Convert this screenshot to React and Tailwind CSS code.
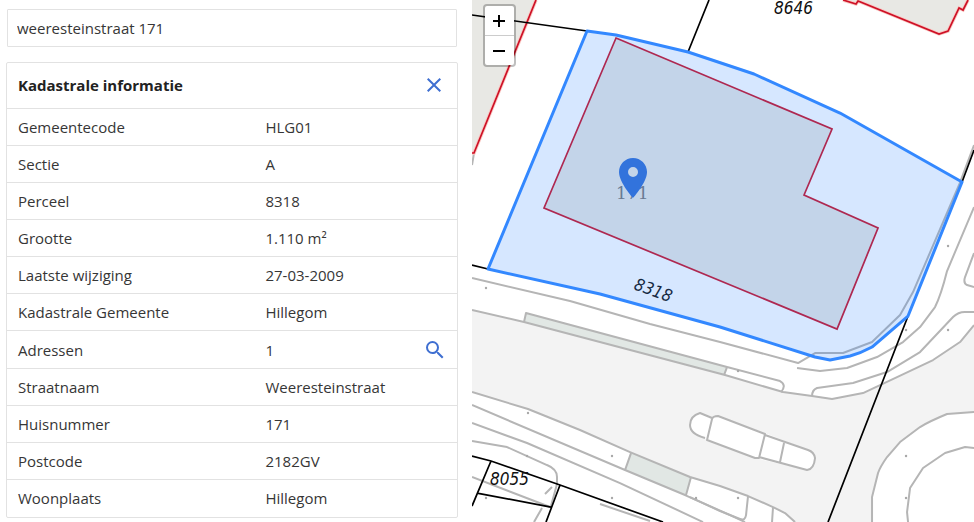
import React from "react";

const before = [
  ["Gemeentecode", "HLG01"],
  ["Sectie", "A"],
  ["Perceel", "8318"],
  ["Grootte", "1.110 m²"],
  ["Laatste wijziging", "27-03-2009"],
  ["Kadastrale Gemeente", "Hillegom"],
];
const after = [
  ["Straatnaam", "Weeresteinstraat"],
  ["Huisnummer", "171"],
  ["Postcode", "2182GV"],
  ["Woonplaats", "Hillegom"],
];

function Row({ label, value, children }) {
  return (
    <tr className={children ? "h-[38px] border-t border-[#e2e2e2]" : "h-[37px] border-t border-[#e2e2e2]"}>
      <th scope="row" className="w-[55%] pl-[11px] text-left font-normal">
        {label}
      </th>
      <td className="pr-[10px] pl-[11px]">
        <div className="flex items-center justify-between">
          <span>{value}</span>
          {children}
        </div>
      </td>
    </tr>
  );
}

function InfoPanel() {
  return (
    <aside className="pt-[9px] pr-[14px] pl-[6px]">
      <input
        type="text"
        aria-label="Zoek adres"
        defaultValue="weeresteinstraat 171"
        className="mx-px block h-[38px] w-[calc(100%-2px)] rounded-[1px] border border-[#e2e2e2] px-[9px] outline-none"
      />
      <section className="mt-[15px] rounded-[2px] border border-[#e2e2e2]">
        <header className="flex h-[45px] items-center justify-between pr-[11px] pb-[2px] pl-[11px]">
          <h2 className="font-bold text-[#222]">Kadastrale informatie</h2>
          <button type="button" aria-label="Sluiten" className="text-[#3f6fd1]">
            <svg viewBox="0 0 24 24" className="size-6" fill="currentColor">
              <path d="M19 6.41 17.59 5 12 10.59 6.41 5 5 6.41 10.59 12 5 17.59 6.41 19 12 13.41 17.59 19 19 17.59 13.41 12z" />
            </svg>
          </button>
        </header>
        <table className="w-full border-collapse">
          <tbody>
            {before.map(([l, v]) => (
              <Row key={l} label={l} value={v} />
            ))}
            <Row label="Adressen" value="1">
              <button type="button" aria-label="Zoek adressen" className="text-[#3f6fd1]">
                <svg viewBox="0 0 24 24" className="size-6" fill="currentColor">
                  <path d="M15.5 14h-.79l-.28-.27A6.47 6.47 0 0 0 16 9.5 6.5 6.5 0 1 0 9.5 16c1.61 0 3.09-.59 4.23-1.57l.27.28v.79l5 4.99L20.49 19l-4.99-5zm-6 0C7.01 14 5 11.99 5 9.5S7.01 5 9.5 5 14 7.01 14 9.5 11.99 14 9.5 14z" />
                </svg>
              </button>
            </Row>
            {after.map(([l, v]) => (
              <Row key={l} label={l} value={v} />
            ))}
          </tbody>
        </table>
      </section>
    </aside>
  );
}

const dots = [
  [486, 288], [528, 413], [527, 456], [612, 456], [612, 498], [696, 498], [486, 498],
  [738, 371], [906, 330], [948, 330], [948, 246], [906, 456], [906, 498], [738, 498],
];

function CadastralMap() {
  return (
    <svg
      viewBox="472 0 502 522"
      preserveAspectRatio="xMinYMin slice"
      className="block h-full w-full bg-white"
      role="img"
      aria-label="Kadastrale kaart"
    >
      {/* road surface */}
      <path
        fill="#f3f3f3"
        d="M472 310 524 322 725 375 783 392 812 396 832 399 863 393 897 377 933 360 960 342 974 325V412L947 414 920 427 900 442 887 457 878 473 872 497V522H795L785 513 773 507 748 496 720 486 690 477 630 452 580 430 528 409 472 392Z"
      />
      {/* traffic islands */}
      <path fill="#fff" d="M712 418 700 413Q690 416 690 425T705 438L707 441 755 458 807 470Q816 467 815 458 813 452 808 450L765 433 718 416Z" />
      <path fill="#e1e7e4" d="M526 313 727 367 724 375 524 322ZM631 453 691 477 686 495 625 470Z" />

      {/* kerb lines */}
      <g fill="none" stroke="#b5b5b5" strokeWidth="2" strokeLinejoin="round">
        <path d="M472 278 570 301 650 324 720 342 798 363 815 353H843L872 342 900 315 913 292 959 185 974 145" />
        <path d="M472 310 524 322 725 375 783 392 812 396 832 399 863 393 897 377 933 360 960 342 974 325" />
        <path d="M524 322 526 313 727 367 724 375M727 367 780 381Q787 385 781 392" />
        <path d="M974 207 947 271Q941 295 935 307L920 327 903 342 877 357 847 368 820 371 797 368" />
        <path d="M974 253 965 277Q963 283 967 285L974 287" />
        <path d="M974 312H967Q959 311 953 317L920 352 887 372 853 383 817 388Q812 390 812 396" />
        <path d="M974 412 947 414Q930 421 920 427L900 442 887 457Q880 467 878 473L872 497V522" />
        <path d="M974 448 965 447 945 453 923 468 910 488 907 512 908 522" />
        <path d="M472 392 528 409 580 430 630 452 690 477 720 486 748 496 773 507 785 513 795 522" />
        <path d="M472 405 625 470 685 495 730 515 745 522M631 453 625 470M691 477 686 495" />
        <path d="M472 423 527 443 620 483 703 522" />
        <path d="M472 441 507 447 547 465Q557 469 557 477V484L551 506M472 477 550 507M552 487 545 494M542 508 534 522M600 504 650 521" />
        <path d="M748 496 746 515Q745 521 740 519L720 511 690 497M773 507 772 522" />
        <path d="M712 418 700 413Q690 416 690 425T705 438M712 419 707 440 755 458H759L765 434 718 416Q713 416 712 419ZM765 435 808 450Q814 452 815 458 814 469 807 470L759 457M784 443 780 462" />
        <path d="M474 153 472 165" />
      </g>
      <g fill="#a8a8a8">
        {dots.map(([x, y]) => (
          <circle key={`${x}-${y}`} cx={x} cy={y} r="1.2" />
        ))}
      </g>

      {/* buildings */}
      <g fill="#e8e8e4">
        <path d="M472 0H536L474 153H472Z" />
        <path d="M843 0 856 4 858 1 939 34 948 31 959 8 963 10 968 0Z" />
        <path d="M616 38 832 129 804 195 878 228 837 329 544 208Z" />
      </g>
      <g fill="none" stroke="#f9c9c4" strokeWidth="3.5">
        <path d="M536 0 474 153H472M843 0 856 4 858 1 939 34 948 31 959 8 963 10 968 0" />
      </g>
      <g fill="none" stroke="#ce1126" strokeWidth="1.7">
        <path d="M536 0 474 153H472M843 0 856 4 858 1 939 34 948 31 959 8 963 10 968 0" />
        <path d="M616 38 832 129 804 195 878 228 837 329 544 208Z" />
      </g>

      {/* parcel boundaries */}
      <path
        fill="none"
        stroke="#000"
        strokeWidth="1.7"
        d="M472 15 587 31M709 0 688 52M472 265 488 269M974 150 962 182M908 316 828 522M472 456 491 461 560 485 663 522M491 461 472 506M477 493 551 507M560 485 546 522"
      />

      <g fontFamily='"DejaVu Sans Condensed", "DejaVu Sans", sans-serif' fontStyle="italic" fontSize="17" fill="#111">
        <text x="774" y="14">8646</text>
        <text x="490" y="485">8055</text>
        <text x="633" y="289" transform="rotate(20 633 289)">8318</text>
      </g>
      <text x="616" y="199" fontFamily='"DejaVu Serif", serif' fontSize="17" fill="#777">171</text>

      {/* selected parcel */}
      <path
        fill="#3388ff"
        fillOpacity="0.2"
        stroke="#3388ff"
        strokeWidth="3"
        strokeLinejoin="round"
        d="M587 31 616 35 688 52 754 74 840 113 962 182 908 316 872 347 Q861 353 850 356L830 360 815 357 720 327 600 294 488 269Z"
      />
      <g transform="translate(609 154) scale(2)">
        <path
          fill="#3273dc"
          fillRule="evenodd"
          d="M12 2C8.13 2 5 5.13 5 9c0 5.25 7 13 7 13s7-7.75 7-13c0-3.87-3.13-7-7-7zm0 9.5a2.5 2.5 0 0 1 0-5 2.5 2.5 0 0 1 0 5z"
        />
      </g>
    </svg>
  );
}

export default function App() {
  return (
    <main className="grid min-h-screen grid-cols-[47fr_50fr] bg-white font-['Open_Sans','Noto_Sans',sans-serif] text-[15px] leading-5 text-[#363636]">
      <InfoPanel />
      <section className="relative h-screen overflow-hidden">
        <CadastralMap />
        <div className="absolute top-1 left-[11px] flex w-[33px] flex-col rounded border-2 border-black/25 bg-white bg-clip-padding text-black">
          <button type="button" aria-label="Inzoomen" className="flex h-[30px] items-center justify-center border-b border-[#ccc]">
            <svg viewBox="0 0 12 12" className="size-3" stroke="currentColor" strokeWidth="2">
              <path d="M0 6H12M6 0V12" />
            </svg>
          </button>
          <button type="button" aria-label="Uitzoomen" className="flex h-[29px] items-center justify-center">
            <svg viewBox="0 0 12 12" className="size-3" stroke="currentColor" strokeWidth="2">
              <path d="M0 6H12" />
            </svg>
          </button>
        </div>
      </section>
    </main>
  );
}
